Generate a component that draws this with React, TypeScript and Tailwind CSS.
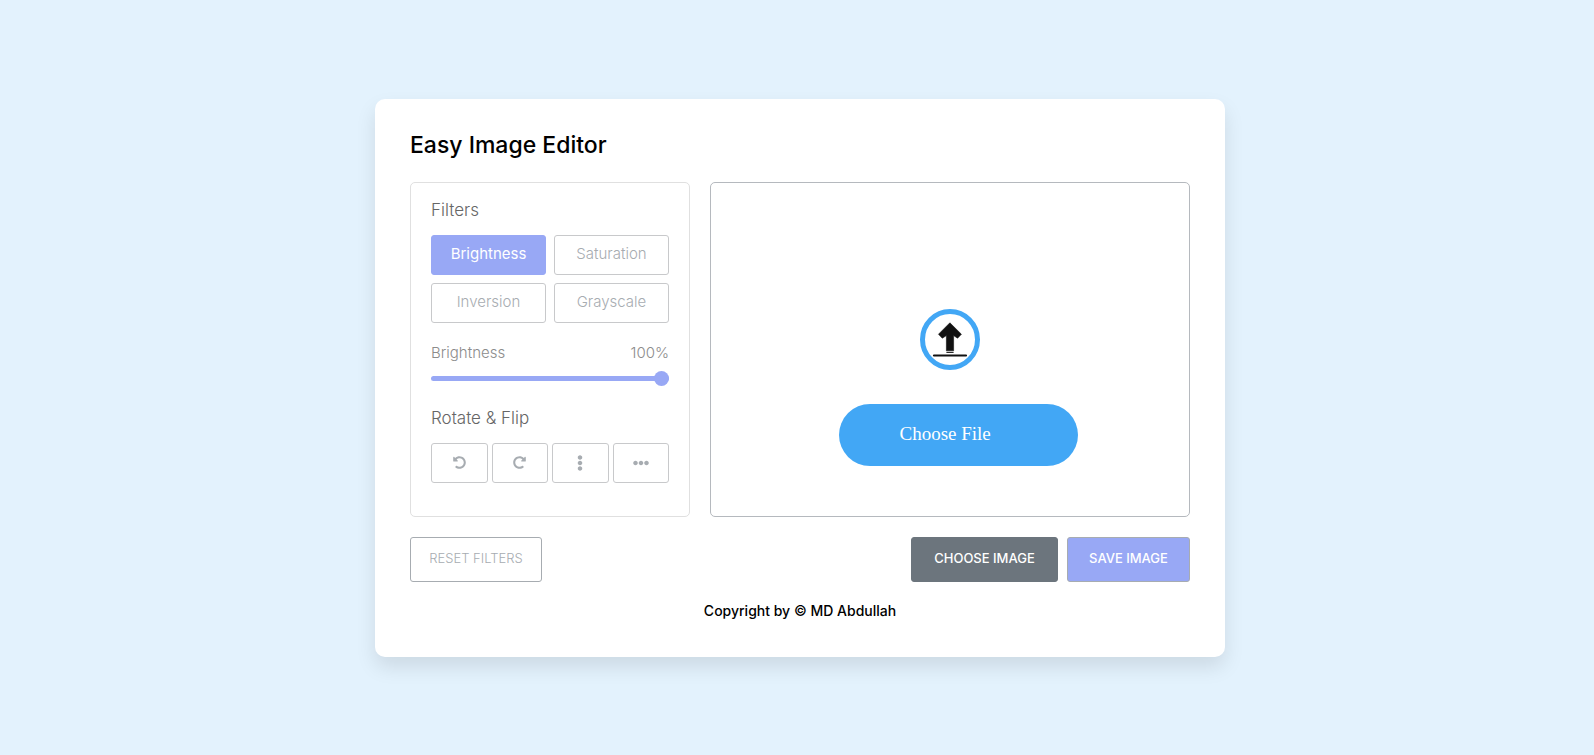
import { useState } from "react";
import { FaUndoAlt, FaRedoAlt, FaEllipsisV, FaEllipsisH } from "react-icons/fa";

const filters = ["Brightness", "Saturation", "Inversion", "Grayscale"];

const transforms = [
  { label: "Rotate left", Icon: FaUndoAlt, size: "size-[13px]" },
  { label: "Rotate right", Icon: FaRedoAlt, size: "size-[13px]" },
  { label: "Flip horizontally", Icon: FaEllipsisV, size: "size-4" },
  { label: "Flip vertically", Icon: FaEllipsisH, size: "size-4" },
];

function UploadIcon() {
  return (
    <svg viewBox="0 0 60 61" className="h-[61px] w-[60px]" aria-hidden="true">
      <ellipse cx="30" cy="30.5" rx="27.5" ry="28" fill="#fff" stroke="#42a7f5" strokeWidth="5" />
      <path
        d="M29.9 13.8 L41.4 25.2 L37.6 29.2 L33.6 26.6 V41.8 H26.4 V26.6 L22.3 29.2 L18.5 25.2 Z"
        fill="#111"
        stroke="#111"
        strokeWidth="0.6"
        strokeLinejoin="round"
      />
      <path d="M26.4 43.4 H33.6" stroke="#111" strokeWidth="1" />
      <path d="M14 46.5 H46" stroke="#111" strokeWidth="2.2" strokeLinecap="round" />
    </svg>
  );
}

export default function App() {
  const [active, setActive] = useState("Brightness");
  const [value, setValue] = useState(100);

  return (
    <div className="flex min-h-screen items-center justify-center bg-[#e3f2fd] py-2.5 pr-2.5 pl-4 font-['Inter',sans-serif]">
      <main className="w-full max-w-[850px] rounded-[10px] bg-white px-[35px] pt-[30px] pb-[35px] shadow-[0_10px_20px_rgba(0,0,0,0.1)]">
        <h1 className="text-[23px] leading-[33px] font-medium text-black">Easy Image Editor</h1>

        <div className="my-5 flex min-h-[335px] flex-wrap gap-5 md:flex-nowrap">
          <section className="w-full rounded-[5px] border border-[#e0e0e0] px-5 py-[15px] md:w-[280px] md:shrink-0">
            <h2 className="text-[17px] leading-6 font-light text-[#666]">Filters</h2>
            <div className="mt-[13px] grid grid-cols-2 gap-2">
              {filters.map((name) => (
                <button
                  key={name}
                  type="button"
                  onClick={() => setActive(name)}
                  className={
                    name === active
                      ? "h-10 rounded-[3px] border border-[#98a8f5] bg-[#98a8f5] text-[15px] text-white"
                      : "h-10 rounded-[3px] border border-[#c8c9cb] bg-white text-[15px] font-light text-[#a7acb1]"
                  }
                >
                  {name}
                </button>
              ))}
            </div>

            <div className="mt-5 flex justify-between text-[15px] leading-5 font-light text-[#8c8c8c]">
              <label htmlFor="amount">{active}</label>
              <output htmlFor="amount">{value}%</output>
            </div>
            <div className="mt-2 flex h-4 items-center">
              <input
                id="amount"
                type="range"
                min="0"
                max="100"
                value={value}
                onChange={(e) => setValue(Number(e.target.value))}
                className="h-[5px] w-full appearance-none rounded-full bg-[#98a8f5] [&::-webkit-slider-thumb]:size-[15px] [&::-webkit-slider-thumb]:appearance-none [&::-webkit-slider-thumb]:rounded-full [&::-webkit-slider-thumb]:bg-[#98a8f5]"
              />
            </div>

            <h2 className="mt-[19px] text-[17px] leading-6 font-light text-[#666]">Rotate &amp; Flip</h2>
            <div className="mt-[13px] grid grid-cols-4 gap-1">
              {transforms.map(({ label, Icon, size }) => (
                <button
                  key={label}
                  type="button"
                  aria-label={label}
                  className="flex h-10 items-center justify-center rounded-[3px] border border-[#c8c9cb] bg-white text-[#a7acb1]"
                >
                  <Icon className={size} />
                </button>
              ))}
            </div>
          </section>

          <section className="flex grow flex-col items-center rounded-[5px] border border-[#b5b9be] px-5 pt-[126px] pb-10">
            <UploadIcon />
            <label className="mt-[34px] ml-4 flex h-[62px] w-[239px] max-w-full cursor-pointer items-center rounded-full bg-[#42a7f5] pl-[61px] font-['Liberation_Serif',serif] text-[19px] text-white">
              Choose File
              <input type="file" accept="image/*" className="sr-only" />
            </label>
          </section>
        </div>

        <div className="flex flex-wrap items-center justify-between gap-2">
          <button
            type="button"
            className="h-[45px] w-[132px] rounded-[3px] border border-[#a7acb1] bg-white text-[13px] font-light text-[#a7acb1] uppercase"
          >
            Reset Filters
          </button>
          <div className="flex flex-wrap gap-[9px]">
            <button
              type="button"
              className="h-[45px] w-[147px] rounded-[3px] border border-[#6c757d] bg-[#6c757d] text-[13px] font-medium text-white uppercase"
            >
              Choose Image
            </button>
            <button
              type="button"
              className="h-[45px] w-[123px] rounded-[3px] border border-[#a7acb1] bg-[#98a8f5] text-[13px] font-medium text-white uppercase"
            >
              Save Image
            </button>
          </div>
        </div>

        <p className="mt-[19px] mb-px text-center text-sm leading-5 font-medium text-black">Copyright by © MD Abdullah</p>
      </main>
    </div>
  );
}
